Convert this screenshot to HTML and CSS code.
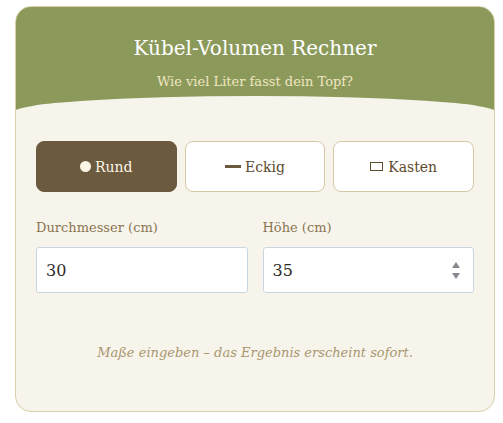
FILE: index.html
```html
<!DOCTYPE html>
<html lang="de">
<head>
<meta charset="utf-8">
<title>Kübel-Volumen Rechner</title>
<link rel="stylesheet" href="styles.css">
</head>
<body>
<div class="card">
  <header class="head">
    <h1 class="title">Kübel-Volumen Rechner</h1>
    <p class="subtitle">Wie viel Liter fasst dein Topf?</p>
  </header>
  <main class="body">
    <div class="shapes">
      <button class="shape active"><span class="ico circle"></span>Rund</button>
      <button class="shape"><span class="ico bar"></span>Eckig</button>
      <button class="shape"><span class="ico box"></span>Kasten</button>
    </div>
    <div class="fields">
      <label class="field">
        <span class="label">Durchmesser (cm)</span>
        <span class="inputwrap"><input class="input" type="text" value="30"></span>
      </label>
      <label class="field">
        <span class="label">Höhe (cm)</span>
        <span class="inputwrap"><input class="input" type="text" value="35">
          <svg class="spin" width="10" height="24" viewBox="0 0 10 24"><path d="M5 4 L9 10 L1 10 Z" fill="#8a8790"/><path d="M1 15 L9 15 L5 21 Z" fill="#8a8790"/></svg>
        </span>
      </label>
    </div>
    <p class="hint">Maße eingeben – das Ergebnis erscheint sofort.</p>
  </main>
</div>
</body>
</html>
```
FILE: styles.css
```css
* { box-sizing: border-box; }
html, body { margin: 0; padding: 0; background: #ffffff; }
body { font-family: Georgia, "DejaVu Serif", "Liberation Serif", serif; }
.card {
  margin: 6px 0 0 15px;
  width: 480px;
  height: 406px;
  border: 1px solid #d9cfa9;
  border-radius: 16px;
  overflow: hidden;
  background: #f7f4ec;
}
.head {
  position: relative;
  background: #8b9a5b;
  padding: 29px 20px 21px;
  text-align: center;
  margin: -1px -1px 0;
}
.head::after {
  content: "";
  position: absolute;
  left: -1px; right: -1px; bottom: -1px;
  height: 16px;
  background: #f7f4ec;
  border-radius: 50% 50% 0 0 / 100% 100% 0 0;
}
.title {
  margin: 0;
  font-weight: normal;
  font-size: 20px;
  line-height: 26px;
  color: #ffffff;
}
.subtitle {
  margin: 13px 0 0;
  font-size: 13px;
  line-height: 16px;
  color: #f1e6c2;
}
.body { padding: 30px 20px 0; }
.shapes {
  display: grid;
  grid-template-columns: repeat(3, 1fr);
  gap: 8px;
}
.shape {
  height: 51px;
  border: 1px solid #d6c8a2;
  border-radius: 8px;
  background: #ffffff;
  color: #5c4a2e;
  font-family: inherit;
  font-size: 14px;
  display: flex;
  align-items: center;
  justify-content: center;
  gap: 4px;
  padding: 0;
}
.shape.active {
  background: #6b5a3e;
  border-color: #6b5a3e;
  color: #fbf5e6;
}
.ico { display: inline-block; flex: none; }
.circle { width: 11px; height: 11px; border-radius: 50%; background: #fbf5e6; }
.bar { width: 16px; height: 3px; background: #6b5a3e; }
.box { width: 13px; height: 9px; border: 1px solid #5c4a2e; margin-right: 1px; }
.fields {
  display: grid;
  grid-template-columns: 1fr 1fr;
  gap: 15px;
  margin-top: 28px;
}
.field { display: flex; flex-direction: column; }
.label {
  font-size: 13px;
  line-height: 16px;
  color: #8a7550;
  margin-bottom: 11px;
}
.inputwrap { position: relative; display: block; }
.input {
  width: 100%;
  height: 46px;
  border: 1px solid #c9d6e2;
  border-radius: 3px;
  background: #ffffff;
  padding: 0 9px;
  font-family: inherit;
  font-size: 16px;
  color: #2e2a26;
  outline: none;
}
.spin { position: absolute; right: 13px; top: 11px; }
.hint {
  margin: 52px 0 0;
  text-align: center;
  font-style: italic;
  font-size: 13px;
  color: #a8976f;
}
```
